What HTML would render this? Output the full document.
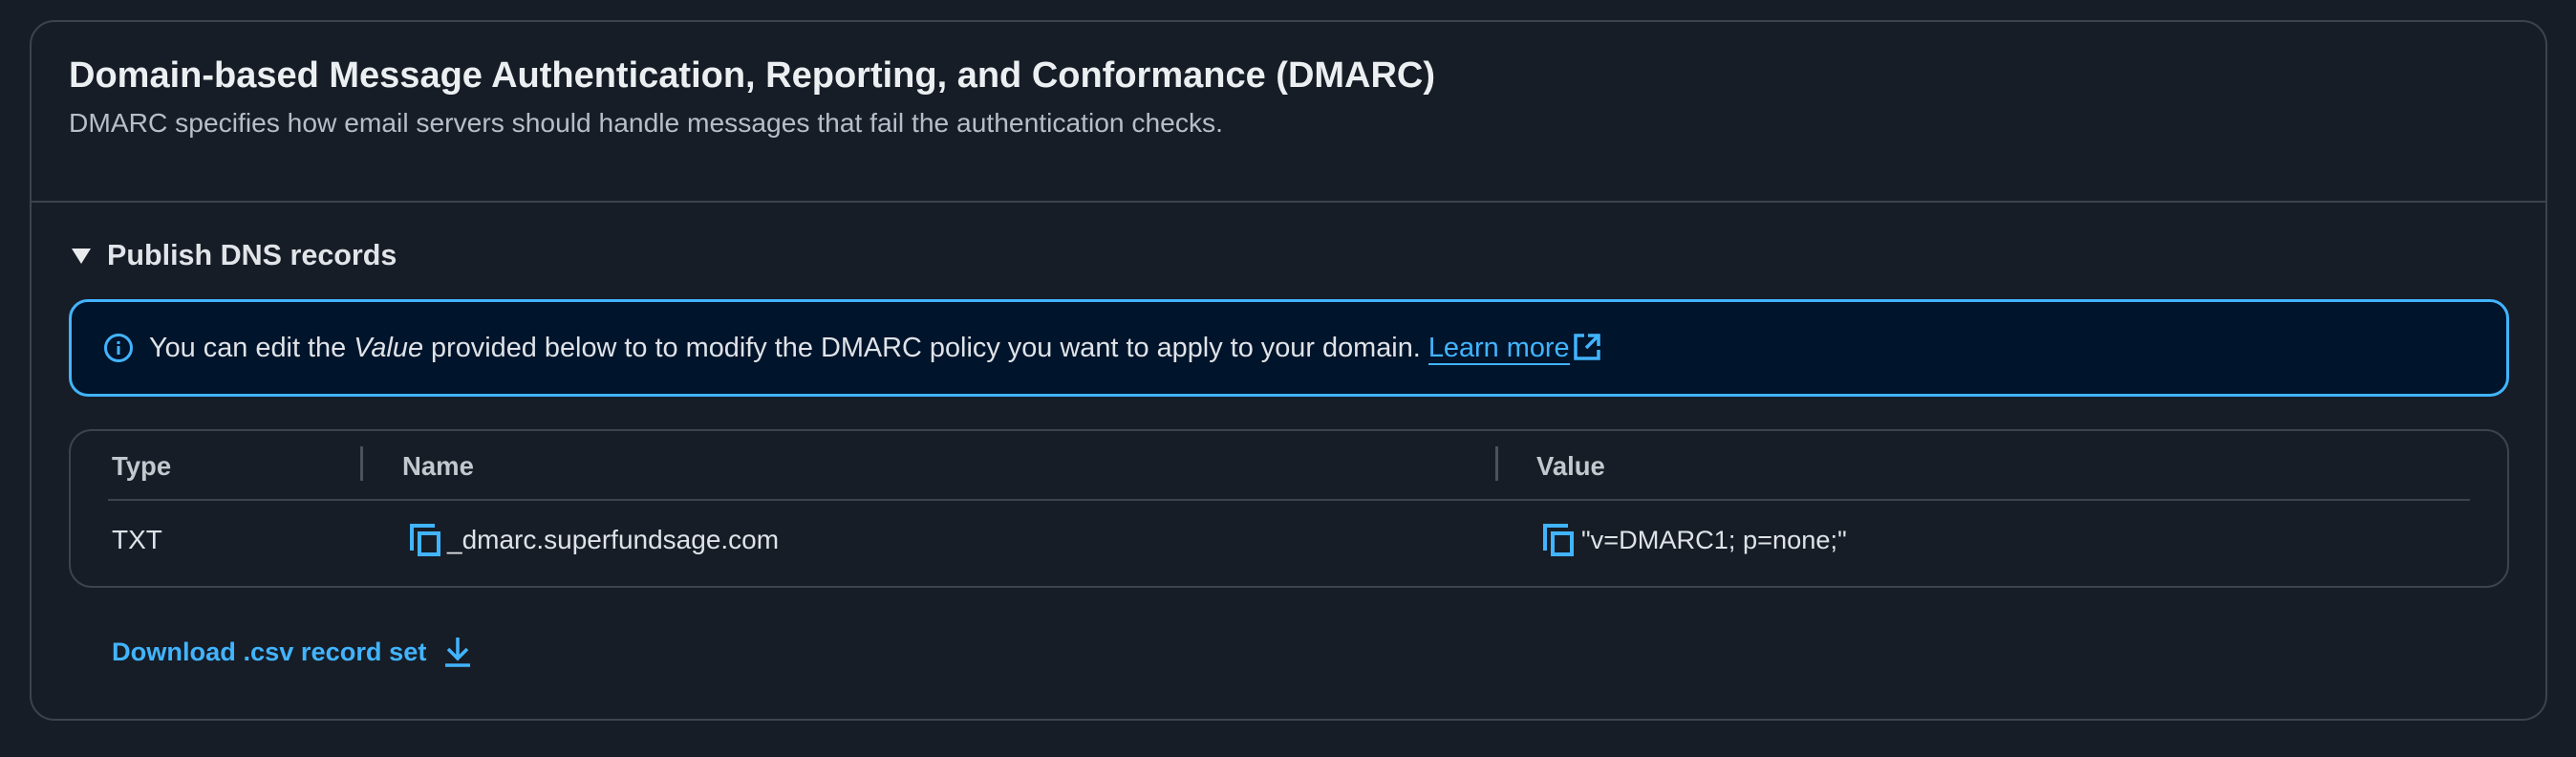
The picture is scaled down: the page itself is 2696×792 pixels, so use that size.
<!DOCTYPE html>
<html><head><meta charset="utf-8"><style>
html,body{margin:0;padding:0;background:#161d26;width:2696px;height:792px;overflow:hidden}
body{font-family:"Liberation Sans",sans-serif;position:relative;color:#d1d5db}
.a{position:absolute;white-space:nowrap}
.card{position:absolute;left:31px;top:21px;width:2635px;height:733px;border:2px solid #3c434d;border-radius:26px;box-sizing:border-box}
</style></head><body>
<div class="card"></div>
<div class="a" style="left:72px;top:58px;font-size:38px;font-weight:bold;color:#eceff2">Domain-based Message Authentication, Reporting, and Conformance (DMARC)</div>
<div class="a" style="left:72px;top:112px;font-size:28.2px;color:#b6bec9">DMARC specifies how email servers should handle messages that fail the authentication checks.</div>
<div class="a" style="left:33px;top:210px;width:2631px;height:2px;background:#3c434d"></div>
<svg class="a" style="left:74px;top:259px" width="22" height="18"><polygon points="1,1 21,1 11,17" fill="#e9ebed"/></svg>
<div class="a" style="left:112px;top:250px;font-size:30.5px;font-weight:bold;color:#e1e4e8">Publish DNS records</div>
<div class="a" style="left:72px;top:313px;width:2554px;height:102px;border:3px solid #42b4ff;border-radius:20px;background:#00142b;box-sizing:border-box"></div>
<svg class="a" style="left:108px;top:348px" width="32" height="32" viewBox="0 0 32 32"><circle cx="16" cy="16" r="13.5" fill="none" stroke="#42b4ff" stroke-width="3"/><rect x="14.5" y="14" width="3" height="9" fill="#42b4ff"/><rect x="14.5" y="9" width="3" height="3" fill="#42b4ff"/></svg>
<div class="a" style="left:156px;top:348px;font-size:28.9px;color:#dfe3e8">You can edit the <i>Value</i> provided below to to modify the DMARC policy you want to apply to your domain. <span style="color:#42b4ff;border-bottom:2px solid #42b4ff">Learn more</span></div>
<svg class="a" style="left:1646px;top:348px" width="30" height="30" viewBox="0 0 30 30"><path d="M12 3H3v24h24v-9" fill="none" stroke="#42b4ff" stroke-width="3.5"/><path d="M16 3h11v11M27 3L14 16" fill="none" stroke="#42b4ff" stroke-width="3.5"/></svg>
<div class="a" style="left:72px;top:449px;width:2554px;height:166px;border:2px solid #3c434d;border-radius:24px;box-sizing:border-box"></div>
<div class="a" style="left:117px;top:472px;font-size:27.5px;font-weight:bold;color:#c3c8cf">Type</div>
<div class="a" style="left:377px;top:467px;width:3px;height:36px;background:#4b525c"></div>
<div class="a" style="left:421px;top:472px;font-size:27.5px;font-weight:bold;color:#c3c8cf">Name</div>
<div class="a" style="left:1565px;top:467px;width:3px;height:36px;background:#4b525c"></div>
<div class="a" style="left:1608px;top:472px;font-size:27.5px;font-weight:bold;color:#c3c8cf">Value</div>
<div class="a" style="left:113px;top:522px;width:2472px;height:2px;background:#3c434d"></div>
<div class="a" style="left:117px;top:549px;font-size:28px;color:#dfe3e8">TXT</div>
<svg class="a" style="left:429px;top:548px" width="34" height="34" viewBox="0 0 34 34"><path d="M2 28V2h24" fill="none" stroke="#42b4ff" stroke-width="4"/><rect x="10" y="10" width="20" height="22" fill="none" stroke="#42b4ff" stroke-width="4"/></svg>
<div class="a" style="left:468px;top:549px;font-size:28px;color:#dfe3e8">_dmarc.superfundsage.com</div>
<svg class="a" style="left:1615px;top:548px" width="34" height="34" viewBox="0 0 34 34"><path d="M2 28V2h24" fill="none" stroke="#42b4ff" stroke-width="4"/><rect x="10" y="10" width="20" height="22" fill="none" stroke="#42b4ff" stroke-width="4"/></svg>
<div class="a" style="left:1655px;top:549px;font-size:27.2px;color:#dfe3e8">"v=DMARC1; p=none;"</div>
<div class="a" style="left:117px;top:666px;font-size:27.2px;font-weight:bold;color:#42b4ff">Download .csv record set</div>
<svg class="a" style="left:463px;top:665px" width="32" height="34" viewBox="0 0 32 34"><path d="M16 2v22M6 14l10 10 10-10M3 31h26" fill="none" stroke="#42b4ff" stroke-width="3.5"/></svg>
</body></html>
